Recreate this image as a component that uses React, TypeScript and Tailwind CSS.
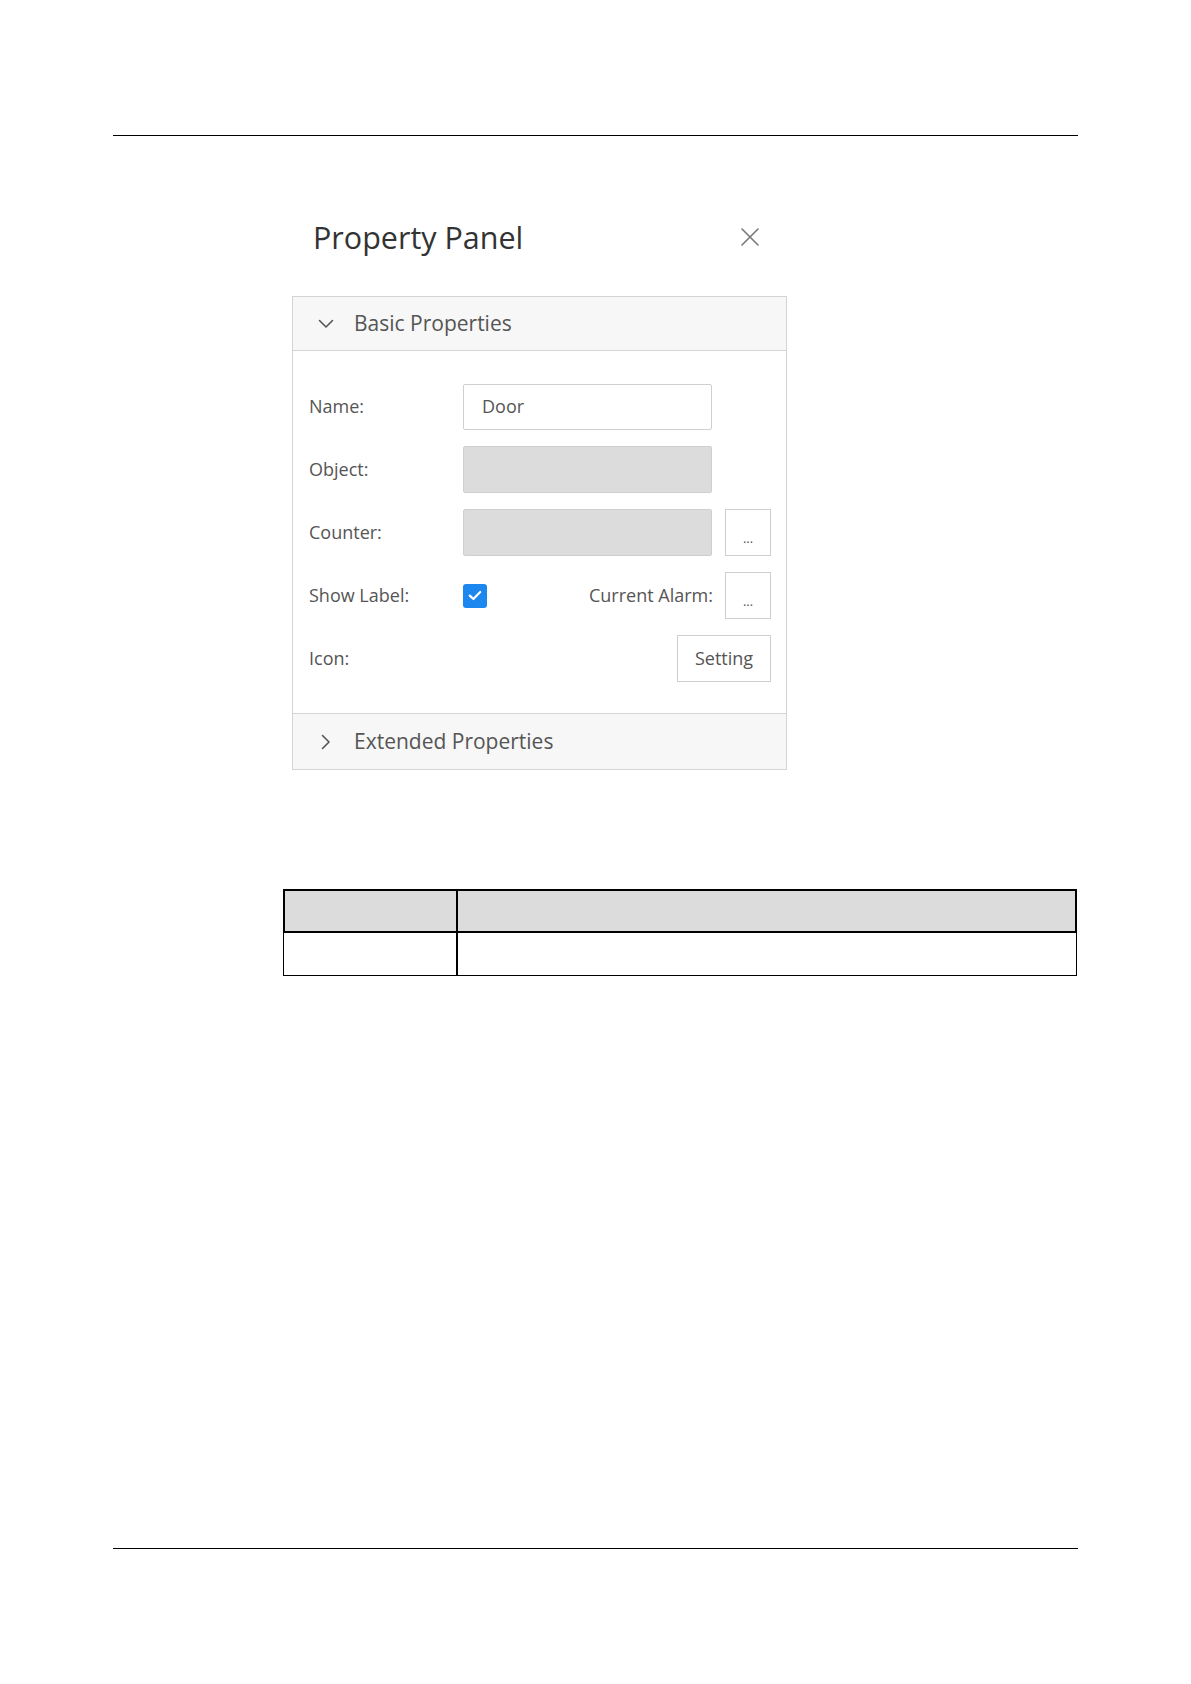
import React from "react";

function ChevronDown() {
  return (
    <svg width="16" height="10" viewBox="0 0 16 10" fill="none">
      <path d="M1.5 1.5 L8 8 L14.5 1.5" stroke="#555" strokeWidth="1.6" strokeLinecap="round" strokeLinejoin="round" />
    </svg>
  );
}

function ChevronRight() {
  return (
    <svg width="10" height="16" viewBox="0 0 10 16" fill="none">
      <path d="M1.5 1.5 L8 8 L1.5 14.5" stroke="#555" strokeWidth="1.6" strokeLinecap="round" strokeLinejoin="round" />
    </svg>
  );
}

function CloseX() {
  return (
    <svg width="18" height="18" viewBox="0 0 18 18" fill="none">
      <path d="M1 1 L17 17 M17 1 L1 17" stroke="#777" strokeWidth="1.6" strokeLinecap="round" />
    </svg>
  );
}

function DotsButton() {
  return (
    <div className="w-[46px] h-[47px] border border-[#cfcfcf] bg-white flex items-end justify-center pb-[10px] text-[13px] leading-none text-[#555] shrink-0">
      ...
    </div>
  );
}

function Label({ children }: { children: React.ReactNode }) {
  return <div className="w-[154px] shrink-0 text-[18px] text-[#555]">{children}</div>;
}

export default function App() {
  return (
    <div className="w-[1191px] h-[1684px] bg-white font-['Open_Sans',sans-serif] flex flex-col px-[113px] pt-[135px]">
      <div className="h-px bg-black w-full" />

      <div className="ml-[179px] w-[495px] mt-[81px]">
        <div className="flex items-center justify-between pl-[21px] pr-[28px] h-[40px]">
          <span className="text-[30.5px] leading-[40px] text-[#333]">Property Panel</span>
          <CloseX />
        </div>

        <div className="mt-[39px] border border-[#d4d4d4] bg-white">
          <div className="h-[54px] bg-[#f7f7f7] border-b border-[#d4d4d4] flex items-center">
            <div className="w-[61px] flex justify-center pl-[4px]">
              <ChevronDown />
            </div>
            <span className="text-[21px] text-[#555]">Basic Properties</span>
          </div>

          <div className="pl-4 pr-[15px] pt-[32px] pb-[31px] border-b border-[#d4d4d4] flex flex-col gap-[16px]">
            <div className="flex items-center h-[47px]">
              <Label>Name:</Label>
              <div className="w-[249px] h-[46px] border border-[#cfcfcf] rounded-[2px] bg-white flex items-center pl-[18px] text-[18px] text-[#555]">
                Door
              </div>
            </div>
            <div className="flex items-center h-[47px]">
              <Label>Object:</Label>
              <div className="w-[249px] h-[47px] border border-[#cfcfcf] rounded-[2px] bg-[#dcdcdc]" />
            </div>
            <div className="flex items-center h-[47px]">
              <Label>Counter:</Label>
              <div className="w-[249px] h-[47px] border border-[#cfcfcf] rounded-[2px] bg-[#dcdcdc]" />
              <div className="ml-[13px]">
                <DotsButton />
              </div>
            </div>
            <div className="flex items-center h-[47px]">
              <Label>Show Label:</Label>
              <div className="w-[24px] h-[24px] rounded-[3px] bg-[#1d87f0] flex items-center justify-center">
                <svg width="14" height="11" viewBox="0 0 14 11" fill="none">
                  <path d="M1.8 5.6 L5.4 9 L12.2 2" stroke="white" strokeWidth="2.2" strokeLinecap="round" strokeLinejoin="round" />
                </svg>
              </div>
              <span className="ml-auto text-[18px] text-[#555] mr-[12px]">Current Alarm:</span>
              <DotsButton />
            </div>
            <div className="flex items-center h-[47px]">
              <Label>Icon:</Label>
              <div className="ml-auto w-[94px] h-[47px] border border-[#cfcfcf] bg-white flex items-center justify-center text-[18px] text-[#555]">
                Setting
              </div>
            </div>
          </div>

          <div className="h-[55px] bg-[#f7f7f7] flex items-center">
            <div className="w-[61px] flex justify-center pl-[4px]">
              <ChevronRight />
            </div>
            <span className="text-[21px] text-[#555]">Extended Properties</span>
          </div>
        </div>
      </div>

      <div className="ml-[170px] mt-[119px] w-[794px]">
        <div className="flex h-[44px] bg-[#dcdcdc] border-2 border-black">
          <div className="w-[173px] border-r-2 border-black" />
          <div className="flex-1" />
        </div>
        <div className="flex h-[43px] border-x border-b border-black">
          <div className="w-[174px] border-r-2 border-black" />
          <div className="flex-1" />
        </div>
      </div>

      <div className="mt-[572px] h-px bg-black w-full" />
    </div>
  );
}
